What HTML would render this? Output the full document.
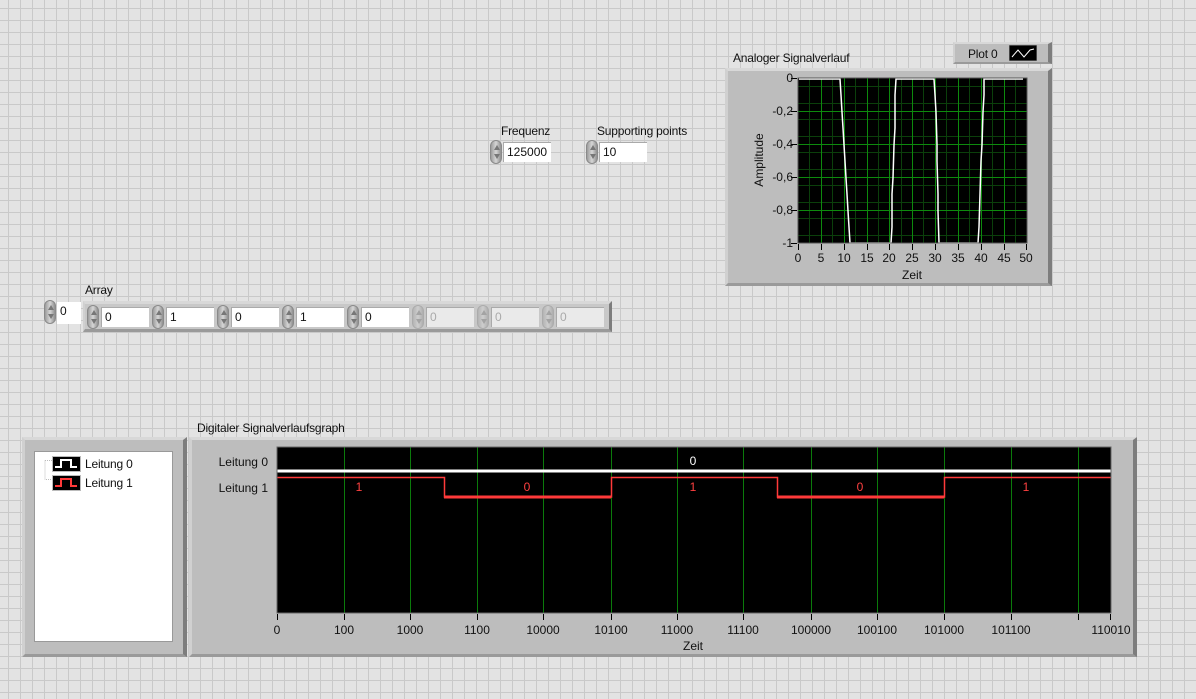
<!DOCTYPE html>
<html><head><meta charset="utf-8"><style>
*{margin:0;padding:0;box-sizing:border-box}
body{width:1196px;height:699px;overflow:hidden;position:relative;font-family:"Liberation Sans",sans-serif;font-size:12px;color:#111;
background-color:#e3e3e3;
background-image:linear-gradient(to right,#c9c9c9 1px,transparent 1px),linear-gradient(to bottom,#c9c9c9 1px,transparent 1px);
background-size:12px 12px;background-position:8px 8px;}
.a{position:absolute}
.lbl{position:absolute;font-size:12px;white-space:nowrap;letter-spacing:-0.2px}
.frame{position:absolute;background:#bdbdbd;border-top:3px solid #d8d8d8;border-left:3px solid #d0d0d0;border-right:4px solid #7d7d7d;border-bottom:3px solid #9a9a9a;}
.spin{position:absolute;width:12px;height:24px;border-radius:6px;background:linear-gradient(to right,#9c9c9c,#d6d6d6 50%,#8f8f8f);border:1px solid #8a8a8a}
.spin:before{content:"";position:absolute;left:3px;top:4px;border-left:3px solid transparent;border-right:3px solid transparent;border-bottom:5px solid #777}
.spin:after{content:"";position:absolute;left:3px;bottom:4px;border-left:3px solid transparent;border-right:3px solid transparent;border-top:5px solid #777}
.spin.d{opacity:.45}
.box{position:absolute;background:#fff;border-top:1px solid #aaa;border-left:1px solid #aaa;font-size:12px;padding:2px 0 0 3px;height:20px}
.box.d{background:#eaeaea;color:#aaa}
</style></head><body>

<!-- Frequenz -->
<div class="lbl" style="left:501px;top:124px">Frequenz</div>
<div class="spin" style="left:490px;top:140px"></div>
<div class="box" style="left:503px;top:142px;width:48px">125000</div>
<div class="lbl" style="left:597px;top:124px">Supporting points</div>
<div class="spin" style="left:586px;top:140px"></div>
<div class="box" style="left:599px;top:142px;width:48px">10</div>

<!-- Analog graph -->
<div class="lbl" style="left:733px;top:51px">Analoger Signalverlauf</div>
<div class="frame" style="left:953px;top:42px;width:99px;height:22px;border-width:2px 4px 2px 2px"></div>
<div class="lbl" style="left:968px;top:47px">Plot 0</div>
<svg class="a" style="left:1009px;top:45px" width="28" height="16"><rect width="28" height="16" fill="#000" stroke="#888"/><polyline points="3,12 9,5 15,12 21,5 25,4" fill="none" stroke="#fff" stroke-width="1"/></svg>
<div class="frame" style="left:725px;top:68px;width:327px;height:218px"></div>
<svg class="a" style="left:725px;top:68px" width="327" height="218" font-family="Liberation Sans" font-size="12" fill="#111">
<rect x="73" y="10" width="229" height="165" fill="#000"/>
<g stroke="#0b3f0b" stroke-width="1">
<path d="M84.5 10V175M107.5 10V175M130.5 10V175M153.5 10V175M176.5 10V175M198.5 10V175M221.5 10V175M244.5 10V175M267.5 10V175M290.5 10V175"/>
<path d="M73 18.5H302M73 35.5H302M73 51.5H302M73 68.5H302M73 84.5H302M73 101.5H302M73 117.5H302M73 134.5H302M73 150.5H302M73 167.5H302"/>
</g>
<g stroke="#0d8a0d" stroke-width="1">
<path d="M96.5 10V175M119.5 10V175M142.5 10V175M164.5 10V175M187.5 10V175M210.5 10V175M233.5 10V175M256.5 10V175M279.5 10V175"/>
<path d="M73 43.5H302M73 76.5H302M73 109.5H302M73 142.5H302"/>
</g>
<polyline points="74,11 115,11 116,27 117,44 118,60 119,77 120,93 121,110 122,126 123,143 124,159 125,175 166,175 167,159 167,126 168,110 169,77 170,60 170,27 171,11 209,11 210,27 211,44 212,77 212,93 213,126 213,143 214,175 253,175 254,159 255,126 256,93 257,77 258,44 259,27 259,11 298,11" fill="none" stroke="#fff" stroke-width="1.5"/>
<rect x="73" y="10" width="229" height="165" fill="none" stroke="#555"/>
<g stroke="#000"><path d="M66 10.5H72M66 43.5H72M66 76.5H72M66 109.5H72M66 142.5H72M66 175.5H72"/>
<path d="M73.5 176V182M96.5 176V182M119.5 176V182M142.5 176V182M164.5 176V182M187.5 176V182M210.5 176V182M233.5 176V182M256.5 176V182M279.5 176V182M301.5 176V182"/></g>
<g text-anchor="end"><text x="68" y="14">0</text><text x="68" y="47">-0,2</text><text x="68" y="80">-0,4</text><text x="68" y="113">-0,6</text><text x="68" y="146">-0,8</text><text x="68" y="179">-1</text></g>
<g text-anchor="middle"><text x="73" y="194">0</text><text x="96" y="194">5</text><text x="119" y="194">10</text><text x="142" y="194">15</text><text x="164" y="194">20</text><text x="187" y="194">25</text><text x="210" y="194">30</text><text x="233" y="194">35</text><text x="256" y="194">40</text><text x="279" y="194">45</text><text x="301" y="194">50</text>
<text x="187" y="211">Zeit</text>
<text transform="translate(38,92) rotate(-90)">Amplitude</text></g>
</svg>

<!-- Array -->
<div class="lbl" style="left:85px;top:283px">Array</div>
<div class="spin" style="left:44px;top:300px"></div>
<div class="box" style="left:57px;top:302px;width:24px;height:22px;border:none">0</div>
<div class="frame" style="left:83px;top:301px;width:529px;height:31px;border-width:3px 3px 3px 2px;background:#c8c8c8"></div>
<div class="spin" style="left:87px;top:305px"></div><div class="box" style="left:101px;top:307px;width:48px">0</div>
<div class="spin" style="left:152px;top:305px"></div><div class="box" style="left:166px;top:307px;width:48px">1</div>
<div class="spin" style="left:217px;top:305px"></div><div class="box" style="left:231px;top:307px;width:48px">0</div>
<div class="spin" style="left:282px;top:305px"></div><div class="box" style="left:296px;top:307px;width:48px">1</div>
<div class="spin" style="left:347px;top:305px"></div><div class="box" style="left:361px;top:307px;width:48px">0</div>
<div class="spin d" style="left:412px;top:305px"></div><div class="box d" style="left:426px;top:307px;width:48px">0</div>
<div class="spin d" style="left:477px;top:305px"></div><div class="box d" style="left:491px;top:307px;width:48px">0</div>
<div class="spin d" style="left:542px;top:305px"></div><div class="box d" style="left:556px;top:307px;width:48px">0</div>

<!-- Digital graph -->
<div class="lbl" style="left:197px;top:421px">Digitaler Signalverlaufsgraph</div>
<div class="frame" style="left:22px;top:437px;width:165px;height:220px"></div>
<div class="a" style="left:34px;top:451px;width:139px;height:191px;background:#fff;border:1px solid #999"></div>
<svg class="a" style="left:44px;top:455px" width="100" height="42"><path d="M1 5.5H8M1 5.5V24.5H8" stroke="#bbb" stroke-dasharray="1 1" fill="none"/>
<rect x="8.5" y="1.5" width="28" height="15" fill="#000" stroke="#bbb"/><polyline points="11,12 17,12 17,5 27,5 27,12 33,12" fill="none" stroke="#fff" stroke-width="2"/>
<rect x="8.5" y="20.5" width="28" height="15" fill="#000" stroke="#bbb"/><polyline points="11,31 17,31 17,24 27,24 27,31 33,31" fill="none" stroke="#ff3a3a" stroke-width="2"/></svg>
<div class="lbl" style="left:85px;top:457px">Leitung 0</div>
<div class="lbl" style="left:85px;top:476px">Leitung 1</div>

<div class="frame" style="left:189px;top:437px;width:948px;height:220px"></div>
<svg class="a" style="left:189px;top:437px" width="948" height="220" font-family="Liberation Sans" font-size="12" fill="#111">
<rect x="88" y="10" width="834" height="166" fill="#000"/>
<g stroke="#0b7a0b"><path d="M155.5 10V176M221.5 10V176M288.5 10V176M354.5 10V176M422.5 10V176M488.5 10V176M554.5 10V176M622.5 10V176M688.5 10V176M755.5 10V176M822.5 10V176M889.5 10V176"/></g>
<path d="M88 34H922" stroke="#fff" stroke-width="3"/>
<polyline points="88,40.5 255.5,40.5 255.5,60 422.5,60 422.5,40.5 588.5,40.5 588.5,60 755.5,60 755.5,40.5 922,40.5" fill="none" stroke="#ff3a3a" stroke-width="1.5"/>
<path d="M255 60H422M588 60H755" stroke="#ff3a3a" stroke-width="3"/>
<rect x="88" y="10" width="834" height="166" fill="none" stroke="#666"/>
<text x="504" y="28" fill="#fff" text-anchor="middle">0</text>
<g fill="#ff4040" text-anchor="middle"><text x="170" y="54">1</text><text x="338" y="54">0</text><text x="504" y="54">1</text><text x="671" y="54">0</text><text x="837" y="54">1</text></g>
<g stroke="#000"><path d="M88.5 177V183M155.5 177V183M221.5 177V183M288.5 177V183M354.5 177V183M422.5 177V183M488.5 177V183M554.5 177V183M622.5 177V183M688.5 177V183M755.5 177V183M822.5 177V183M889.5 177V183M921.5 177V183"/></g>
<g text-anchor="middle"><text x="88" y="197">0</text><text x="155" y="197">100</text><text x="221" y="197">1000</text><text x="288" y="197">1100</text><text x="354" y="197">10000</text><text x="422" y="197">10100</text><text x="488" y="197">11000</text><text x="554" y="197">11100</text><text x="622" y="197">100000</text><text x="688" y="197">100100</text><text x="755" y="197">101000</text><text x="822" y="197">101100</text><text x="922" y="197">110010</text>
<text x="504" y="213">Zeit</text></g>
<g text-anchor="end"><text x="79" y="29">Leitung 0</text><text x="79" y="55">Leitung 1</text></g>
</svg>
</body></html>
